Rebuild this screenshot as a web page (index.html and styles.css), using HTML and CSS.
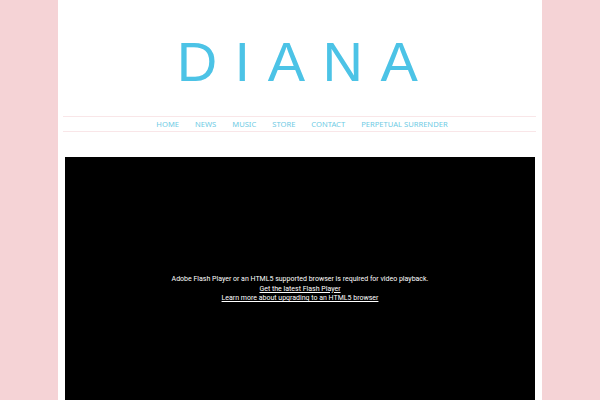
FILE: index.html
```html
<!DOCTYPE html>
<html>
<head>
<meta charset="utf-8">
<link rel="stylesheet" href="styles.css">
</head>
<body>
<div class="page">
  <header class="masthead">
    <h1 class="logo">DIANA</h1>
  </header>
  <nav class="nav">
    <a href="#">HOME</a>
    <a href="#">NEWS</a>
    <a href="#">MUSIC</a>
    <a href="#">STORE</a>
    <a href="#">CONTACT</a>
    <a href="#">PERPETUAL SURRENDER</a>
  </nav>
  <div class="video">
    <div class="notice">
      <p>Adobe Flash Player or an HTML5 supported browser is required for video playback.</p>
      <p><a href="#">Get the latest Flash Player </a></p>
      <p><a href="#">Learn more about upgrading to an HTML5 browser</a></p>
    </div>
  </div>
</div>
</body>
</html>
```
FILE: styles.css
```css
html, body {
  margin: 0;
  padding: 0;
}
body {
  background: #f5d3d6;
  font-family: "Liberation Sans", Arial, sans-serif;
}
.page {
  width: 484px;
  margin-left: 58px;
  background: #ffffff;
  height: 400px;
  overflow: hidden;
  display: flex;
  flex-direction: column;
}
.masthead {
  height: 116px;
  display: flex;
  justify-content: center;
}
.logo {
  margin: 0;
  padding-top: 29px;
  padding-left: 12px;
  font-weight: normal;
  font-size: 56px;
  line-height: 66px;
  letter-spacing: 17.5px;
  color: #4cc3e6;
}
.nav {
  margin: 0 6px 0 5px;
  height: 14px;
  border-top: 1px solid #f9e6e8;
  border-bottom: 1px solid #f9e6e8;
  display: flex;
  justify-content: center;
  align-items: center;
  gap: 16px;
  padding-left: 5px;
}
.nav a {
  font-family: "Noto Sans", sans-serif;
  font-size: 7.6px;
  color: #6fcbe4;
  text-decoration: none;
}
.video {
  margin: 25px 7px 0 7px;
  flex: 1;
  background: #000000;
  display: flex;
  justify-content: center;
  padding-top: 118px;
}
.notice {
  font-family: Roboto, sans-serif;
  font-size: 7px;
  color: #ffffff;
  text-align: center;
}
.notice p {
  margin: 0;
  line-height: 9.6px;
}
.notice a {
  color: #ffffff;
  text-decoration: underline;
}
```
